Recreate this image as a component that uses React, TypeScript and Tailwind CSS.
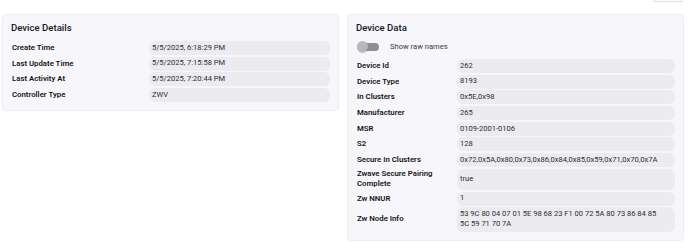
const details = [
  { label: "Create Time", value: "5/5/2025, 6:18:29 PM" },
  { label: "Last Update Time", value: "5/5/2025, 7:15:58 PM" },
  { label: "Last Activity At", value: "5/5/2025, 7:20:44 PM" },
  { label: "Controller Type", value: "ZWV" }
];

const deviceData = [
  { label: "Device Id", value: "262" },
  { label: "Device Type", value: "8193" },
  { label: "In Clusters", value: "0x5E,0x98" },
  { label: "Manufacturer", value: "265" },
  { label: "MSR", value: "0109-2001-0106" },
  { label: "S2", value: "128" },
  { label: "Secure In Clusters", value: "0x72,0x5A,0x80,0x73,0x86,0x84,0x85,0x59,0x71,0x70,0x7A" },
  { label: "Zwave Secure Pairing Complete", value: "true" },
  { label: "Zw NNUR", value: "1" },
  { label: "Zw Node Info", value: "53 9C 80 04 07 01 5E 98 68 23 F1 00 72 5A 80 73 86 84 85 5C 59 71 70 7A" }
];

type Row = { label: string; value: string };

function Rows({ rows, grid }: { rows: Row[]; grid: string }) {
  return (
    <div className={`grid ${grid}`}>
      {rows.map((row) => (
        <div key={row.label} className="contents">
          <div className="flex items-center py-[0.5px] pl-px pr-2 text-[7.8px] leading-[10px] font-semibold text-[#141418]">
            {row.label}
          </div>
          <div className="flex min-h-[14px] items-center rounded-[6px] bg-[#ebebf0] py-[1.75px] pr-[9px] pl-[3px] text-[7.55px] leading-[10.5px] text-[#2e2e34]">
            {row.value}
          </div>
        </div>
      ))}
    </div>
  );
}

function Card({ title, children }: { title: string; children: React.ReactNode }) {
  return (
    <section className="rounded-[4px] border border-[#ececf2] bg-[#f7f7fb] px-[8px] pt-[6px] pb-[8px] shadow-[0_0_1px_rgba(0,0,0,0.04)]">
      <h2 className="mb-[6px] text-[9.6px] leading-[14px] font-medium text-[#16161a]">{title}</h2>
      {children}
    </section>
  );
}

export default function App() {
  return (
    <div className="min-h-[249px] bg-white pr-[6px] pl-[2px]" style={{ fontFamily: "Roboto, 'Liberation Sans', sans-serif" }}>
      <div className="flex h-[14px] justify-end">
        <div className="mr-px h-[2px] w-[30px] rounded-b-[3px] border-x border-b border-[#dcdce2] bg-white" />
      </div>
      <div className="grid grid-cols-2 items-start gap-[8px]">
        <Card title="Device Details">
          <Rows rows={details} grid="grid-cols-[138px_1fr] gap-y-[1.6px]" />
        </Card>
        <Card title="Device Data">
          <div className="mb-[7px] flex items-center gap-[11px] pl-px">
            <div className="relative h-[11px] w-[22px]">
              <div className="absolute top-[1.5px] right-0 left-[5px] h-[8px] rounded-full bg-[#8d8d92]" />
              <div className="absolute top-0 left-0 h-[11px] w-[11px] rounded-full bg-[#b8b8bc] shadow-[0_1px_1px_rgba(0,0,0,0.2)]" />
            </div>
            <span className="text-[7.6px] leading-[10px] text-[#3a3a40]">Show raw names</span>
          </div>
          <Rows rows={deviceData} grid="grid-cols-[101px_1fr] gap-y-[1.7px]" />
        </Card>
      </div>
    </div>
  );
}
